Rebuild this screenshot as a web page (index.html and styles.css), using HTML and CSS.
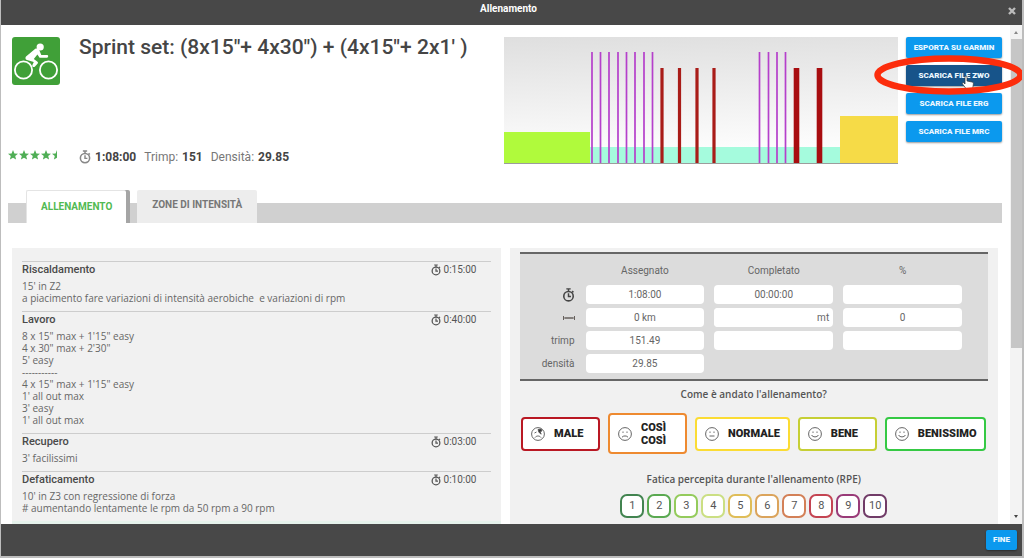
FILE: index.html
```html
<!DOCTYPE html>
<html lang="it">
<head>
<meta charset="utf-8">
<title>Allenamento</title>
<link rel="stylesheet" href="styles.css">
</head>
<body>
<svg class="defs" aria-hidden="true">
  <symbol id="watch" viewBox="0 0 14 16">
    <circle cx="7" cy="9.3" r="5.4" fill="none" stroke="currentColor" stroke-width="1.8"/>
    <path d="M4.500 1h5M7 1v3M11.2 3.6l1.4 1.4M7 6v3.6h2.8" fill="none" stroke="currentColor" stroke-width="1.700"/>
  </symbol>
  <symbol id="star" viewBox="0 0 10 10">
    <path d="M5 0l1.4 3.4 3.6.3-2.8 2.3.9 3.6L5 7.7 1.9 9.6l.9-3.6L0 3.7l3.6-.3z" fill="currentColor"/>
  </symbol>
  <symbol id="half-star" viewBox="0 0 10 10">
    <path d="M5 0v7.7L1.9 9.6l.9-3.6L0 3.7l3.6-.3z" fill="currentColor"/>
  </symbol>
</svg>
<div class="dialog">
  <header class="titlebar">
    <h1>Allenamento</h1>
    <button class="close" aria-label="Chiudi"><svg viewBox="0 0 8 8" width="8" height="8"><path d="M1 1l6 6M7 1L1 7" stroke="currentColor" stroke-width="2.4"/></svg></button>
  </header>

  <div class="viewport">
    <main class="content">
      <section class="summary">
        <div class="side">
          <svg class="sport" viewBox="0 0 48 48" role="img" aria-label="Ciclismo">
            <rect width="48" height="48" rx="3" fill="#40a038"/>
            <g fill="none" stroke="#fff" stroke-width="1.800"><circle cx="11.5" cy="33" r="8.6"/><circle cx="36.500" cy="33" r="8.600"/></g>
            <circle cx="28.200" cy="10" r="3.600" fill="#fff"/>
            <path d="M23 12c1.600-1 3.600-.2 4.300 1.300l2 4.800h5.700c1.600 0 1.600 2.700 0 2.700h-7.400l-2.200-3.200-3.600 4.300 3.400 2.500c.8.600 1 1.300.5 2.100L23 29.500c-1.200 1.300-3.300.2-2.600-1.500l1.400-3-6.800-2c-1.700-.7-2-2.200-1-3.600z" fill="#fff"/>
          </svg>
          <div class="stars" role="img" aria-label="4,5 stelle su 5">
            <svg><use href="#star"/></svg><svg><use href="#star"/></svg><svg><use href="#star"/></svg><svg><use href="#star"/></svg><svg><use href="#half-star"/></svg>
          </div>
        </div>
        <div class="heading">
          <h2>Sprint set: (8x15"+ 4x30") + (4x15"+ 2x1' )</h2>
          <p class="stats">
            <span><svg class="watch"><use href="#watch"/></svg> <b>1:08:00</b></span>
            <span>Trimp: <b>151</b></span>
            <span>Densità: <b>29.85</b></span>
          </p>
        </div>
        <svg class="chart" viewBox="0 0 394 127" preserveAspectRatio="none" role="img" aria-label="Profilo di intensità">
          <defs><linearGradient id="sky" x1="0" y1="0" x2="0.100" y2="1"><stop offset="0" stop-color="#dfdfdf"/><stop offset="1" stop-color="#fff"/></linearGradient></defs>
          <rect width="394" height="127" fill="url(#sky)"/>
          <rect y="95" width="86" height="31" fill="#b0fa3c"/>
          <rect x="86" y="110" width="250" height="16" fill="#a5fbdd"/>
          <path d="M88 15v111M96.500 15v111M105 15v111M114 15v111M122.500 15v111M131 15v111M140 15v111M148.500 15v111M255.500 15v111M264.500 15v111M273 15v111M281.500 15v111" stroke="#b540cb" stroke-width="1.700"/>
          <path d="M158 31v95M175.500 31v95M193 31v95M210 31v95" stroke="#a91c18" stroke-width="3.200"/>
          <path d="M292.500 31v95M315.500 31v95" stroke="#a80d10" stroke-width="5.600"/>
          <rect x="336" y="79" width="58" height="47" fill="#f6db47"/>
          <path d="M0 126.500h394" stroke="#9c9c9c"/>
        </svg>
        <div class="exports">
          <button class="action">ESPORTA SU GARMIN</button>
          <button class="action current">SCARICA FILE ZWO</button>
          <button class="action">SCARICA FILE ERG</button>
          <button class="action">SCARICA FILE MRC</button>
          <svg class="marker" viewBox="0 0 150 40" aria-hidden="true">
            <path d="M91 22c0-1.500 2-1.500 2 0v4l5 1c1.500.4 1.500 1 1.300 2.500l-.6 4H92l-3.500-4.500c-.8-1.200.8-1.800 1.600-1l.9 1z" fill="#fff" stroke="#333" stroke-width=".7"/>
            <ellipse cx="75" cy="20" rx="71.500" ry="16.500" fill="none" stroke="#fc2d0c" stroke-width="6.500"/>
          </svg>
        </div>
      </section>

      <nav class="tabs">
        <button class="tab selected">ALLENAMENTO</button>
        <button class="tab">ZONE DI INTENSITÀ</button>
      </nav>

      <div class="panels">
        <section class="panel plan">
          <article class="phase">
            <header><h3>Riscaldamento</h3><span class="time"><svg class="watch"><use href="#watch"/></svg>0:15:00</span></header>
            <p>15' in Z2
a piacimento fare variazioni di intensità aerobiche  e variazioni di rpm</p>
          </article>
          <article class="phase">
            <header><h3>Lavoro</h3><span class="time"><svg class="watch"><use href="#watch"/></svg>0:40:00</span></header>
            <p>8 x 15" max + 1'15" easy
4 x 30" max + 2'30"
5' easy
-----------
4 x 15" max + 1'15" easy
1' all out max
3' easy
1' all out max</p>
          </article>
          <article class="phase">
            <header><h3>Recupero</h3><span class="time"><svg class="watch"><use href="#watch"/></svg>0:03:00</span></header>
            <p>3' facilissimi</p>
          </article>
          <article class="phase">
            <header><h3>Defaticamento</h3><span class="time"><svg class="watch"><use href="#watch"/></svg>0:10:00</span></header>
            <p>10' in Z3 con regressione di forza
# aumentando lentamente le rpm da 50 rpm a 90 rpm</p>
          </article>
          <div class="notes"></div>
        </section>

        <section class="panel report">
          <div class="results">
            <table>
              <thead><tr><td></td><th>Assegnato</th><th>Completato</th><th>%</th></tr></thead>
              <tbody>
                <tr>
                  <th><svg class="watch" role="img" aria-label="Durata"><use href="#watch"/></svg></th>
                  <td><input aria-label="Durata assegnata" value="1:08:00" readonly></td>
                  <td><input aria-label="Durata completata" value="00:00:00"></td>
                  <td><input aria-label="Durata percentuale" readonly></td>
                </tr>
                <tr>
                  <th><svg width="12" height="6" viewBox="0 0 12 6" role="img" aria-label="Distanza"><path d="M.5 1v4M11.500 1v4M1 3h10M3 2v2M5 2v2M7 2v2M9 2v2" stroke="#66605c" fill="none"/></svg></th>
                  <td><input aria-label="Distanza assegnata" value="0 km" readonly></td>
                  <td><label class="unit"><input aria-label="Distanza completata in metri">mt</label></td>
                  <td><input aria-label="Distanza percentuale" value="0" readonly></td>
                </tr>
                <tr>
                  <th>trimp</th>
                  <td><input aria-label="Trimp assegnato" value="151.49" readonly></td>
                  <td><input aria-label="Trimp completato"></td>
                  <td><input aria-label="Trimp percentuale" readonly></td>
                </tr>
                <tr>
                  <th>densità</th>
                  <td><input aria-label="Densità assegnata" value="29.85" readonly></td>
                  <td></td><td></td>
                </tr>
              </tbody>
            </table>
          </div>
          <h4>Come è andato l'allenamento?</h4>
          <div class="moods">
            <button class="mood bad"><svg viewBox="0 0 14 14"><circle cx="7" cy="7" r="6.400"/><path d="M4 10.500c1.500-2 4.500-2 6 0M3.500 6l2-1M9 6.500l1.500.5"/><path d="M7 2.500l3-.5 1 2-2 .5 1 2-2-1z" fill="#333"/></svg>MALE</button>
            <button class="mood poor"><svg viewBox="0 0 14 14"><circle cx="7" cy="7" r="6.400"/><path d="M4 10.200c1.500-1.700 4.500-1.700 6 0M5 4.500v1.400M9 4.500v1.400"/></svg><span>COSÌ<br>COSÌ</span></button>
            <button class="mood normal"><svg viewBox="0 0 14 14"><circle cx="7" cy="7" r="6.400"/><path d="M4.500 9h5M5 4.500v1.400M9 4.500v1.400"/></svg>NORMALE</button>
            <button class="mood good"><svg viewBox="0 0 14 14"><circle cx="7" cy="7" r="6.400"/><path d="M3.500 8c1.500 2.500 5.500 2.500 7 0M5 4.500v1.400M9 4.500v1.400"/></svg>BENE</button>
            <button class="mood great"><svg viewBox="0 0 14 14"><circle cx="7" cy="7" r="6.400"/><path d="M3.500 8c1.500 2.500 5.500 2.500 7 0M5 4.500v1.400M9 4.500v1.400"/></svg>BENISSIMO</button>
          </div>
          <h4>Fatica percepita durante l'allenamento (RPE)</h4>
          <div class="rpe">
            <button class="r1">1</button><button class="r2">2</button><button class="r3">3</button><button class="r4">4</button><button class="r5">5</button><button class="r6">6</button><button class="r7">7</button><button class="r8">8</button><button class="r9">9</button><button class="r10">10</button>
          </div>
        </section>
      </div>
    </main>
    <div class="scrollbar" aria-hidden="true"><i class="up"></i><i class="thumb"></i><i class="down"></i></div>
  </div>

  <footer class="footer"><button class="action finish">FINE</button></footer>
</div>
</body>
</html>
```
FILE: styles.css
```css
* { box-sizing: border-box; }
body {
  margin: 0;
  font: 11px/12px Roboto, "Liberation Sans", sans-serif;
  color: #666;
  background: #bdbdbd;
}
h1, h2, h3, h4, p { margin: 0; }
button { font: inherit; padding: 0; border: 0; cursor: pointer; }
.defs { display: none; }
.watch { width: 10px; height: 12px; flex: none; }

.dialog {
  display: flex;
  flex-direction: column;
  height: 100vh;
  padding: 0 2px 2px 1px;
}
.titlebar {
  flex: none;
  display: grid;
  grid-template-columns: 1fr auto 1fr;
  height: 25px;
  padding: 3px 6px 0 0;
  background: #484848;
  color: #fff;
}
.titlebar h1 { grid-column: 2; font-size: 10px; line-height: 12px; font-weight: 700; }
.close { justify-self: end; height: 18px; color: #bbb; background: none; }

.viewport { flex: 1; min-height: 0; display: flex; background: #fff; overflow: hidden; }
.content { flex: 1; min-width: 0; padding: 12px 8px 0 7px; }

.summary { display: grid; grid-template-columns: 71px minmax(0, 425fr) minmax(0, 394fr) 104px; min-height: 127px; }
.side, .heading { display: flex; flex-direction: column; justify-content: space-between; }
.sport { width: 48px; height: 48px; margin-left: 4px; }
.stars { display: flex; gap: 1px; padding-bottom: 4px; color: #4fae55; }
.stars svg { width: 10px; height: 10px; }
.heading h2 { font-size: 21px; line-height: 20px; font-weight: 500; color: #454545; }
.stats { display: flex; gap: 8px; font-size: 12px; line-height: 14px; color: #777; }
.stats span { display: flex; align-items: center; gap: 4px; }
.stats b { color: #444; }
.stats .watch { width: 12px; height: 14px; color: #888; }
.chart { width: 100%; height: 127px; }

.exports { position: relative; display: flex; flex-direction: column; gap: 7px; padding-left: 8px; }
.action {
  height: 21px;
  border-radius: 2px;
  background: #0b99ee;
  color: #eaf7ff;
  font-size: 8px;
  font-weight: 900;
  box-shadow: 0 1px 2px #0006;
}
.action.current { background: #17548a; }
.marker { position: absolute; left: -24px; top: 18px; width: 150px; height: 40px; pointer-events: none; z-index: 1; }

.tabs {
  display: flex;
  align-items: flex-end;
  gap: 11px;
  margin-top: 26px;
  padding-left: 18px;
  background: linear-gradient(#fff 13px, #d0d0d0 13px);
}
.tab {
  height: 33px;
  padding: 0 15px 4px;
  border-radius: 2px 2px 0 0;
  background: #ededed;
  color: #777;
  font-size: 10px;
  font-weight: 700;
}
.tab.selected { background: #fff; color: #52ba52; padding: 0 14px; border: solid #e4e4e4; border-width: 1px 0 0 1px; box-shadow: 4px 0 #a5a5a5; }

.panels { display: grid; grid-template-columns: minmax(0, 1fr) minmax(0, 1fr); gap: 9px; padding: 25px 4px 0; }
.panel { min-height: 290px; background: #f1f1f1; }
.plan { padding-top: 13px; }
.phase { margin: 0 10px; padding-bottom: 7px; border-top: 1px solid #cdcdcd; }
.phase header { display: flex; justify-content: space-between; align-items: center; height: 15px; }
.phase h3 { font-size: 11px; font-weight: 500; color: #4a4a4a; }
.phase p { margin-top: 3px; font-family: "Open Sans", Roboto, sans-serif; font-size: 10px; white-space: pre-wrap; }
.time { display: flex; gap: 3px; padding: 0 14px 0 8px; font-size: 10px; color: #555; }
.notes { height: 20px; background: #e6f2ec; }

.report { padding: 4px 10px 0; text-align: center; }
.results { padding: 6px 21px 4px 0; border: solid #666; border-width: 2px 0; background: #dcdcdc; }
.results table { width: 100%; table-layout: fixed; border-collapse: collapse; }
.results td, .results th { height: 23px; padding: 2px 5px; font-weight: 400; vertical-align: middle; }
.results thead td { width: 61px; }
.results thead th { height: 20px; padding-top: 0; font-size: 10px; }
.results tbody th { padding-right: 6px; text-align: right; font-size: 10px; }
.results th svg { display: inline-block; vertical-align: middle; color: #444; }
.results th .watch { width: 13px; height: 14px; }
.results input, .unit {
  display: block;
  width: 100%;
  height: 19px;
  padding: 0;
  border: 0;
  border-radius: 4px;
  background: #fff;
  color: #666;
  font: inherit;
  font-size: 10px;
  text-align: center;
}
.results .unit { display: flex; align-items: center; padding-right: 4px; }
.unit input { flex: 1; min-width: 0; }

.report h4 { margin-top: 7px; font-family: "Open Sans", Roboto, sans-serif; font-size: 10px; line-height: 12px; font-weight: 600; color: #555; }
.moods { display: flex; justify-content: center; align-items: center; gap: 8px; min-height: 41px; margin: 13px 0 19px; }
.mood {
  display: flex;
  align-items: center;
  gap: 9px;
  min-width: 79px;
  height: 34px;
  padding: 0 8px;
  border: 2px solid;
  border-radius: 4px;
  background: #fff;
  font-size: 11px;
  font-weight: 900;
  line-height: 13px;
  text-align: left;
}
.mood, .mood span { color: #222; }
.mood svg { width: 14px; height: 14px; flex: none; fill: none; stroke: #555; stroke-width: 0.900; }
.mood.bad { border-color: #b91823; }
.mood.poor { border-color: #ee8a30; height: 41px; }
.mood.normal { border-color: #fbdc34; }
.mood.good { border-color: #c6cf35; }
.mood.great { border-color: #35c944; }

.rpe { display: flex; justify-content: center; gap: 3px; margin-top: 9px; }
.rpe button { width: 24px; height: 24px; border: 2px solid; border-radius: 7px; background: #fff; color: #555; }
.rpe .r1 { border-color: #428450; }
.rpe .r2 { border-color: #5aa951; }
.rpe .r3 { border-color: #94cb5c; }
.rpe .r4 { border-color: #cbdf83; }
.rpe .r5 { border-color: #dfbd58; }
.rpe .r6 { border-color: #dba45c; }
.rpe .r7 { border-color: #d38057; }
.rpe .r8 { border-color: #c44452; }
.rpe .r9 { border-color: #993a78; }
.rpe .r10 { border-color: #713c68; }

.scrollbar { flex: none; display: flex; flex-direction: column; align-items: center; width: 12px; background: #f3f3f3; }
.scrollbar .up, .scrollbar .down { width: 0; border: solid transparent; border-width: 0 2px; }
.scrollbar .up { margin: 6px 0 5px; border-bottom: 3px solid #888; }
.scrollbar .thumb { width: 11px; height: 62%; background: #c6c6c6; }
.scrollbar .down { margin: auto 0 6px; border-top: 3px solid #444; }

.footer { flex: none; display: flex; justify-content: flex-end; height: 32px; padding: 6px 5px; background: #484848; }
.finish { width: 31px; height: 20px; }
```
